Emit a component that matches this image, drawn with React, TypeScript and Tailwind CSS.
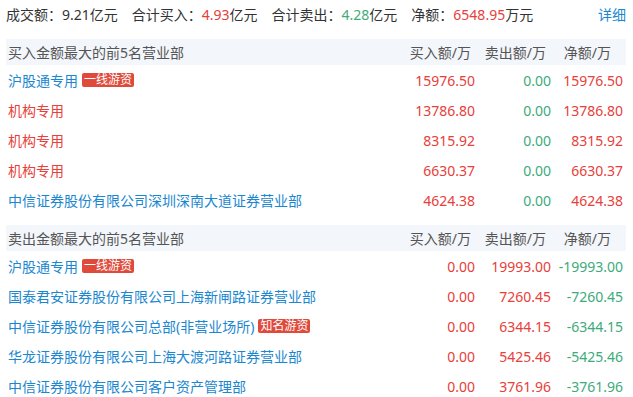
const buys = [
  { name: "沪股通专用", tag: "一线游资", kind: "blue", buy: "15976.50", sell: "0.00", net: "15976.50" },
  { name: "机构专用", kind: "red", buy: "13786.80", sell: "0.00", net: "13786.80" },
  { name: "机构专用", kind: "red", buy: "8315.92", sell: "0.00", net: "8315.92" },
  { name: "机构专用", kind: "red", buy: "6630.37", sell: "0.00", net: "6630.37" },
  { name: "中信证券股份有限公司深圳深南大道证券营业部", kind: "blue", buy: "4624.38", sell: "0.00", net: "4624.38" },
];

const sells = [
  { name: "沪股通专用", tag: "一线游资", kind: "blue", buy: "0.00", sell: "19993.00", net: "-19993.00" },
  { name: "国泰君安证券股份有限公司上海新闸路证券营业部", kind: "blue", buy: "0.00", sell: "7260.45", net: "-7260.45" },
  { name: "中信证券股份有限公司总部(非营业场所)", tag: "知名游资", kind: "blue", buy: "0.00", sell: "6344.15", net: "-6344.15" },
  { name: "华龙证券股份有限公司上海大渡河路证券营业部", kind: "blue", buy: "0.00", sell: "5425.46", net: "-5425.46" },
  { name: "中信证券股份有限公司客户资产管理部", kind: "blue", buy: "0.00", sell: "3761.96", net: "-3761.96" },
];

type Row = (typeof buys)[number] & { tag?: string };

function numColor(v: string, zeroGreen: boolean) {
  if (v.startsWith("-")) return "text-[#3dab7b]";
  if (v === "0.00") return zeroGreen ? "text-[#3dab7b]" : "text-[#e8403a]";
  return "text-[#e8403a]";
}

function Section({ title, rows, side }: { title: string; rows: Row[]; side: "buy" | "sell" }) {
  return (
    <div>
      <div className="flex h-[26px] items-center bg-[#f3f6fa] text-[#555]">
        <div className="flex-1 pl-[2px]">{title}</div>
        <div className="w-[80px] pr-[4px] text-right">买入额/万</div>
        <div className="w-[76px] pr-[5px] text-right">卖出额/万</div>
        <div className="w-[75px] pr-[15px] text-right">净额/万</div>
      </div>
      {rows.map((r, i) => (
        <div key={i} className="flex h-[30px] items-center">
          <div className="flex flex-1 items-center pl-[2px]">
            <span className={r.kind === "red" ? "text-[#e8403a]" : "text-[#1a87cf]"}>{r.name}</span>
            {r.tag && (
              <span className="ml-[4px] flex h-[14px] items-center rounded-[2px] bg-[#df4a3b] px-[2px] text-[12px] leading-none text-white">
                {r.tag}
              </span>
            )}
          </div>
          <div className={`w-[80px] text-right ${side === "sell" ? "text-[#e8403a]" : "text-[#e8403a]"}`}>{r.buy}</div>
          <div className={`w-[76px] text-right ${numColor(r.sell, true)}`}>{r.sell}</div>
          <div className={`w-[75px] pr-[3px] text-right ${numColor(r.net, false)}`}>{r.net}</div>
        </div>
      ))}
    </div>
  );
}

export default function App() {
  return (
    <div
      className="h-[397px] w-[633px] overflow-hidden bg-white pl-[6px] pr-[7px] text-[14px] text-[#333]"
      style={{ fontFamily: '"Noto Sans", "Noto Sans CJK SC", sans-serif' }}
    >
      <div className="mb-[11px] flex h-[28px] items-center">
        <span>成交额：9.21亿元</span>
        <span className="ml-[14px]">
          合计买入：<span className="text-[#e8403a]">4.93</span>亿元
        </span>
        <span className="ml-[14px]">
          合计卖出：<span className="text-[#3dab7b]">4.28</span>亿元
        </span>
        <span className="ml-[14px]">
          净额：<span className="text-[#e8403a]">6548.95</span>万元
        </span>
        <span className="ml-auto text-[#1a87cf]">详细</span>
      </div>
      <Section title="买入金额最大的前5名营业部" rows={buys} side="buy" />
      <div className="h-[10px]" />
      <Section title="卖出金额最大的前5名营业部" rows={sells} side="sell" />
    </div>
  );
}
